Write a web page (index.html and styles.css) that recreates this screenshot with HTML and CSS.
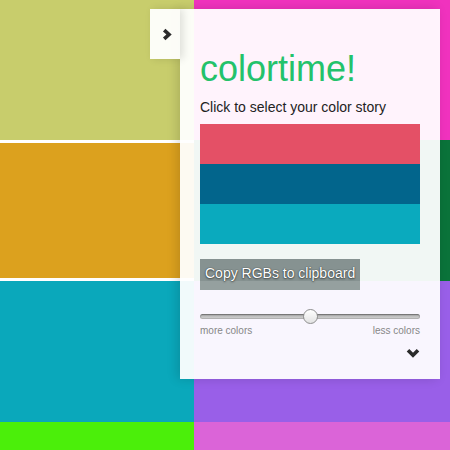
FILE: index.html
```html
<!DOCTYPE html>
<html lang="en">
<head>
<meta charset="utf-8">
<title>colortime!</title>
<link rel="stylesheet" href="styles.css">
</head>
<body>
<main class="board">
  <div class="cell olive"></div>
  <div class="cell magenta"></div>
  <div class="cell gold selected"></div>
  <div class="cell forest"></div>
  <div class="cell teal"></div>
  <div class="cell violet"></div>
  <div class="cell lime"></div>
  <div class="cell orchid"></div>
</main>
<aside class="panel">
  <button class="tab" aria-label="Hide panel">
    <svg width="10" height="13" viewBox="0 0 10 13"><polyline points="2.2,2.2 7,6.5 2.2,10.8" fill="none" stroke="#2b2b2b" stroke-width="3.6" stroke-linecap="butt" stroke-linejoin="miter"/></svg>
  </button>
  <h1 class="title">colortime!</h1>
  <p class="subtitle">Click to select your color story</p>
  <div class="story">
    <div class="swatch red"></div>
    <div class="swatch navy"></div>
    <div class="swatch aqua"></div>
  </div>
  <button class="copy">Copy RGBs to clipboard</button>
  <input class="slider" type="range" min="0" max="100" value="50">
  <div class="scale"><span>more colors</span><span>less colors</span></div>
  <div class="more">
    <svg width="14" height="10" viewBox="0 0 14 10"><polyline points="2,2.2 7,7.2 12,2.2" fill="none" stroke="#2b2b2b" stroke-width="3.6" stroke-linecap="butt" stroke-linejoin="miter"/></svg>
  </div>
</aside>
</body>
</html>
```

FILE: styles.css
```css
html, body {
  margin: 0;
  padding: 0;
  width: 450px;
  height: 450px;
  overflow: hidden;
  font-family: "Liberation Sans", Arial, sans-serif;
}

.board {
  display: grid;
  grid-template-columns: 194px 1fr;
  grid-template-rows: 140px 141px 141px 1fr;
  width: 450px;
  height: 450px;
}

.olive { background: #c8cd6c; }
.magenta { background: #f032be; }
.gold { background: #dca11e; }
.forest { background: #0a733a; }
.teal { background: #0aa8bb; }
.violet { background: #995fe8; }
.lime { background: #4bef0a; }
.orchid { background: #db64d8; }

.selected {
  box-shadow: inset 0 3px 0 #fff, inset 0 -3px 0 #fff;
}

.panel {
  position: absolute;
  left: 180px;
  top: 9px;
  width: 260px;
  height: 370px;
  box-sizing: border-box;
  padding: 42px 20px 0;
  background: rgba(255, 255, 255, 0.945);
  box-shadow: -3px 0 10px rgba(0, 0, 0, 0.14);
}

.tab {
  position: absolute;
  left: -30px;
  top: 0;
  width: 30px;
  height: 50px;
  padding: 0 0 0 3px;
  border: 0;
  display: flex;
  align-items: center;
  justify-content: center;
  background: rgba(255, 255, 255, 0.95);
  box-shadow: 3px 0 8px rgba(0, 0, 0, 0.12);
  z-index: 2;
}

.title {
  margin: 0 0 12px;
  font-size: 36px;
  line-height: 36px;
  font-weight: normal;
  color: #23c26b;
}

.subtitle {
  margin: 0 0 9px;
  font-size: 14px;
  line-height: 16px;
  color: #222;
}

.story {
  display: flex;
  flex-direction: column;
}

.swatch { height: 40px; }
.red { background: #e45066; }
.navy { background: #02658c; }
.aqua { background: #0aaabe; }

.copy {
  display: block;
  margin: 15px 0 0;
  padding: 4px 5px 7px;
  border: 0;
  font-family: "Liberation Sans", Arial, sans-serif;
  font-size: 14px;
  line-height: 20px;
  color: #fff;
  background: linear-gradient(to bottom, #869291 22px, #95a09f 22px);
  text-shadow: 0 0 1px rgba(0, 0, 0, 0.7), 0 1px 2px rgba(0, 0, 0, 0.5);
}

.slider {
  -webkit-appearance: none;
  appearance: none;
  display: block;
  width: 220px;
  height: 15px;
  margin: 19px 0 0;
  padding: 0;
  background: transparent;
}

.slider::-webkit-slider-runnable-track {
  height: 5px;
  border-radius: 3px;
  background: linear-gradient(to bottom, #7c7c7c 0, #bdbdbd 40%, #d4d4d4 100%);
  box-shadow: inset 0 0 0 1px rgba(0, 0, 0, 0.15);
}

.slider::-webkit-slider-thumb {
  -webkit-appearance: none;
  appearance: none;
  width: 15px;
  height: 15px;
  margin-top: -5px;
  border-radius: 50%;
  box-sizing: border-box;
  border: 1px solid #8e8e8e;
  background: linear-gradient(to bottom, #ffffff, #e2e2e2);
}

.scale {
  display: flex;
  justify-content: space-between;
  margin-top: 1px;
  font-size: 10px;
  line-height: 12px;
  color: #878787;
}

.more {
  display: flex;
  justify-content: flex-end;
  margin-top: 11px;
}
```
